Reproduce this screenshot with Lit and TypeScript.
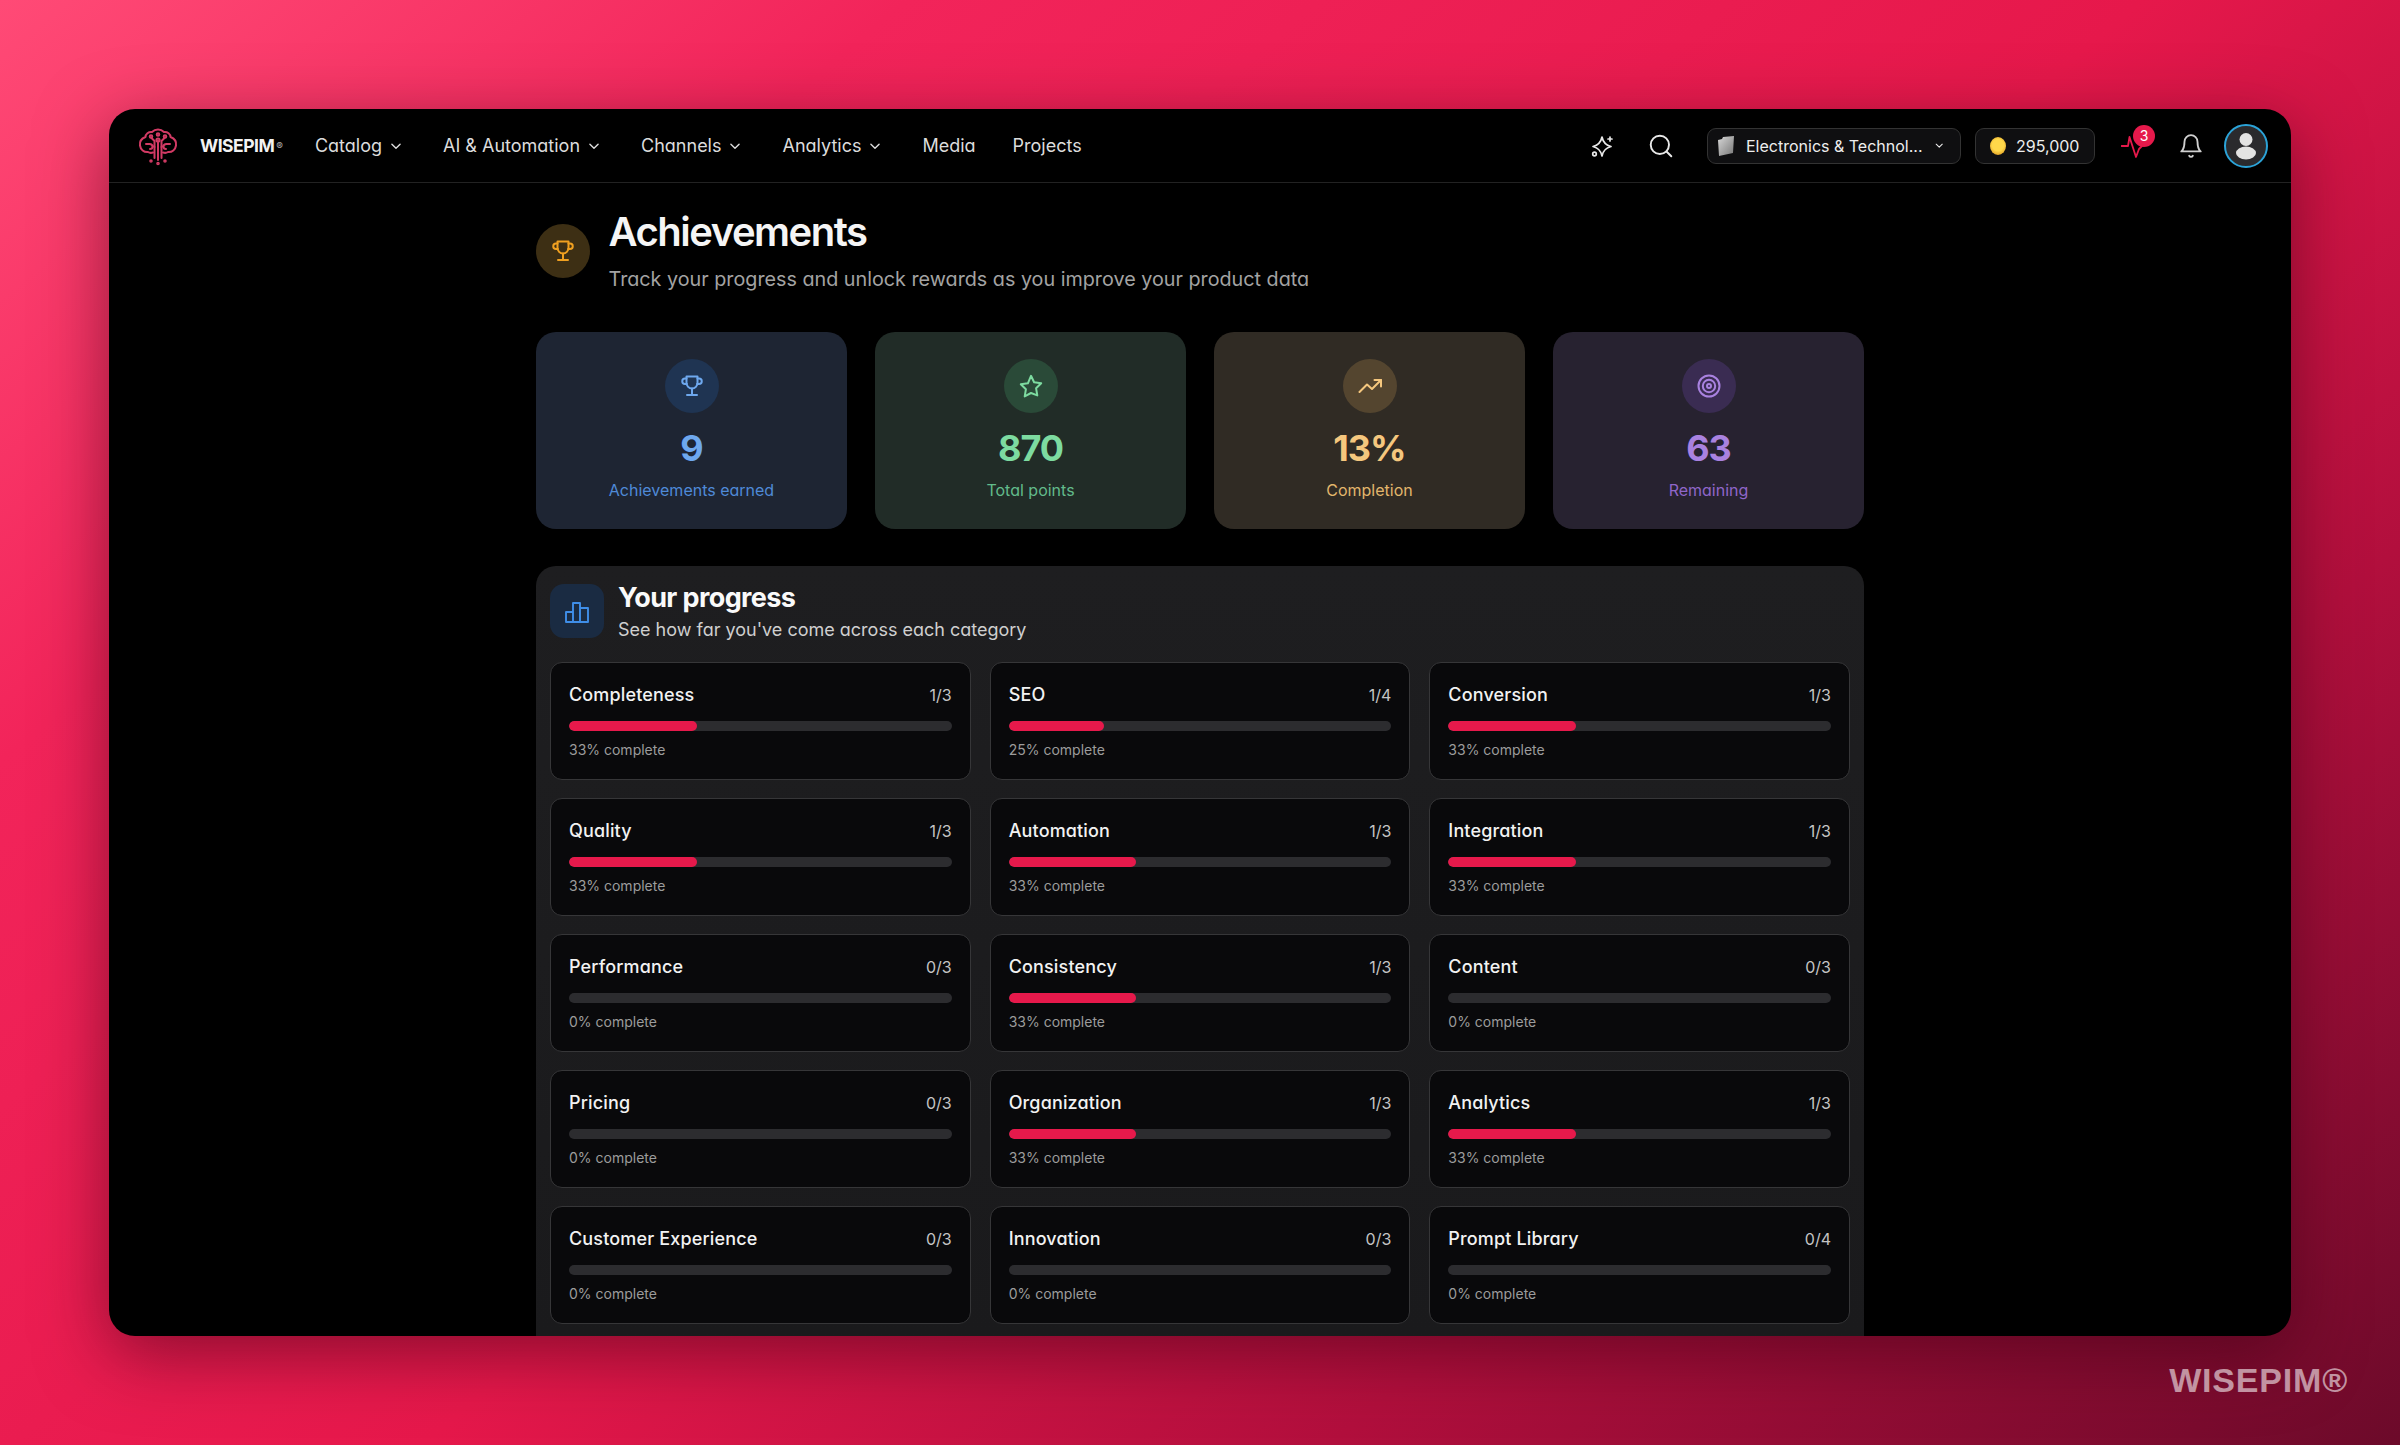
import { LitElement, html, css, svg } from "lit";
import { customElement } from "lit/decorators.js";

const cats: [string, number, number][] = [
  ["Completeness", 1, 3], ["SEO", 1, 4], ["Conversion", 1, 3],
  ["Quality", 1, 3], ["Automation", 1, 3], ["Integration", 1, 3],
  ["Performance", 0, 3], ["Consistency", 1, 3], ["Content", 0, 3],
  ["Pricing", 0, 3], ["Organization", 1, 3], ["Analytics", 1, 3],
  ["Customer Experience", 0, 3], ["Innovation", 0, 3], ["Prompt Library", 0, 4],
];

const chev = html`<svg class="chev" viewBox="0 0 12 12"><path d="M2.5 4.5 6 8l3.5-3.5"/></svg>`;
const trophy = svg`<path d="M6.500 2.500h11V9a5.500 5.500 0 0 1-11 0z"/><path d="M6.500 4.500H5a2.500 2.500 0 0 0 0 5.500h1.900"/><path d="M17.500 4.500H19a2.500 2.500 0 0 1 0 5.500h-1.900"/><path d="M12 14.500V21"/><path d="M7 21h10"/>`;
const star = svg`<path d="M12 1.800l3.100 6.500 7.100 1-5.100 5 1.200 7.100L12 19l-6.300 3.400 1.200-7.100-5.100-5 7.100-1z"/>`;
const trend = svg`<path d="M23 6l-9 9-5-4.500L1.500 18"/><path d="M16.500 6H23v6.500"/>`;
const target = svg`<circle cx="12" cy="12" r="10.500"/><circle cx="12" cy="12" r="6.200"/><circle cx="12" cy="12" r="2"/>`;

const stats = [
  { cls: "blue", icon: trophy, v: "9", l: "Achievements earned" },
  { cls: "green", icon: star, v: "870", l: "Total points" },
  { cls: "amber", icon: trend, v: "13%", l: "Completion" },
  { cls: "purple", icon: target, v: "63", l: "Remaining" },
];

@customElement("app-root")
export class AppRoot extends LitElement {
  static styles = css`
    :host { display: block; height: 1445px; overflow: hidden; font-family: Inter, "Noto Sans", sans-serif; font-feature-settings: "cv11"; color: #fff; }
    .stage { position: relative; height: 1445px; box-sizing: border-box; padding: 109px 109px 109px; background: linear-gradient(140deg, #ff4a76 0%, #f2245a 22%, #e6184b 52%, #b20f3d 74%, #6c0a2a 100%); }
    .window { height: 1227px; background: #000; border-radius: 26px; overflow: hidden; box-shadow: 0 18px 70px rgba(60,0,20,.55); }
    nav { height: 73px; border-bottom: 1px solid #222; display: flex; align-items: center; padding: 0 23px 0 29px; box-sizing: content-box; }
    .logo { width: 40px; height: 40px; flex: none; }
    .brand { margin-left: 22px; font-size: 17.500px; font-weight: 700; letter-spacing: -.5px; color: #f2f2f2; display: flex; align-items: center; gap: 2px; font-feature-settings: normal; }
    .brand small { font-size: 10px; color: #aaa; font-weight: 500; letter-spacing: 0; }
    .links { display: flex; margin-left: 32px; gap: 40px; font-size: 18px; color: #dcdcdc; }
    .links span { display: flex; align-items: center; gap: 7px; white-space: nowrap; }
    .links .tight { margin-right: -3px; }
    .chev { width: 14px; height: 14px; fill: none; stroke: currentColor; stroke-width: 1.2; stroke-linecap: round; stroke-linejoin: round; }
    .right { margin-left: auto; display: flex; align-items: center; }
    .ic { fill: none; stroke: #e8e8e8; stroke-width: 1.7; stroke-linecap: round; stroke-linejoin: round; width: 24px; height: 24px; flex: none; }
    .sp { margin-right: 36px; }
    .se { margin-right: 34px; }
    .pill { height: 36px; box-sizing: border-box; border: 1px solid #333; border-radius: 9px; background: #0f0f11; display: flex; align-items: center; font-size: 16px; color: #eee; white-space: nowrap; }
    .sel { width: 254px; padding: 0 16px 0 9px; gap: 11px; margin-right: 14px; }
    .sel .txt { flex: 1; }
    .sel .chev { width: 15px; height: 15px; }
    .folder { width: 18px; height: 22px; flex: none; }
    .coinp { width: 120px; padding: 0 13px 0 14px; gap: 10px; margin-right: 26px; }
    .coin { width: 16px; height: 18px; border-radius: 50%; background: radial-gradient(circle at 50% 45%, #ffd84a 0 45%, #e6a92a 75%, #f0c870 100%); flex: none; }
    .pulse { position: relative; width: 30px; height: 36px; margin-right: 27px; display: flex; align-items: center; }
    .pulse svg { width: 30px; height: 36px; fill: none; stroke: #e6194b; stroke-width: 1.800; stroke-linejoin: round; stroke-linecap: round; }
    .badge { position: absolute; left: 12px; top: -3px; width: 22px; height: 22px; border-radius: 50%; background: #e6194b; color: #fff; font-size: 14px; display: flex; align-items: center; justify-content: center; }
    .bell { margin-right: 20px; width: 26px; height: 26px; stroke: #cfcfcf; }
    .avatar { width: 44px; height: 44px; box-sizing: border-box; border-radius: 50%; border: 2px solid #2ba3d8; background: #2a2a2d; display: flex; align-items: center; justify-content: center; }
    .avatar svg { width: 24px; height: 28px; fill: #e3e3e3; }
    main { width: 1328px; margin: 0 auto 0 427px; padding-top: 25px; }
    header { display: flex; align-items: center; gap: 18.500px; margin-bottom: 39px; }
    .hicon { width: 54px; height: 54px; border-radius: 50%; background: #3d2f14; display: flex; align-items: center; justify-content: center; flex: none; color: #f0a020; }
    .hicon svg, .sicon svg { width: 24px; height: 24px; fill: none; stroke: currentColor; stroke-width: 2; stroke-linecap: round; stroke-linejoin: round; }
    h1 { margin: 0; font-size: 40px; line-height: 48px; font-weight: 600; letter-spacing: -1.500px; color: #f5f5f5; }
    .hsub { margin-top: 9px; font-size: 19.750px; line-height: 28px; color: #a3a3a3; }
    .stats { display: grid; grid-template-columns: repeat(4, 1fr); gap: 28px; margin-bottom: 37px; }
    .stat { height: 197px; box-sizing: border-box; border-radius: 20px; padding-top: 27px; display: flex; flex-direction: column; align-items: center; }
    .sicon { width: 54px; height: 54px; border-radius: 50%; display: flex; align-items: center; justify-content: center; }
    .sv { margin-top: 15px; font-size: 36px; line-height: 40px; font-weight: 700; letter-spacing: -1px; }
    .sl { margin-top: 10px; font-size: 16px; line-height: 24px; }
    .blue { background: #1e2533; } .blue .sicon { background: #1f3452; color: #6ea8ee; } .blue .sv { color: #6ea8ee; } .blue .sl { color: #4f8ad8; }
    .green { background: #212c27; } .green .sicon { background: #2a4a38; color: #7ddba0; } .green .sv { color: #7ddba0; } .green .sl { color: #62bb8b; }
    .amber { background: #302b24; } .amber .sicon { background: #54452f; color: #f5c77e; } .amber .sv { color: #f5c77e; } .amber .sl { color: #e2b66c; }
    .purple { background: #272230; } .purple .sicon { background: #3a2c52; color: #a982e0; } .purple .sv { color: #a982e0; } .purple .sl { color: #8f66c9; }
    .panel { background: linear-gradient(180deg, #1e1e20, #1a1a1c); border-radius: 20px 20px 0 0; padding: 18px 14px 14px; }
    .phead { display: flex; gap: 14px; margin-bottom: 20px; height: 58px; }
    .picon { width: 54px; height: 54px; border-radius: 14px; background: #1a2b42; color: #3f8ee8; display: flex; align-items: center; justify-content: center; flex: none; }
    .picon svg { width: 26px; height: 26px; fill: none; stroke: currentColor; stroke-width: 1.900; stroke-linejoin: round; }
    .ptext { padding-top: 1px; }
    h2 { margin: 0; font-size: 27px; line-height: 26px; font-weight: 700; letter-spacing: -.6px; color: #fafafa; font-feature-settings: normal; }
    .psub { margin-top: 7px; font-size: 18px; line-height: 24px; color: #cfcfcf; }
    .grid { display: grid; grid-template-columns: repeat(3, 1fr); gap: 18px 19px; }
    .card { border: 1px solid #363638; border-radius: 12px; background: #09090b; padding: 19px 18px; }
    .top { display: flex; justify-content: space-between; line-height: 26px; }
    .name { font-size: 18px; font-weight: 500; letter-spacing: .15px; color: #f2f2f2; }
    .cnt { font-size: 16px; color: #c4c4c4; }
    .track { margin-top: 13px; height: 10px; border-radius: 5px; background: #2c2c2f; overflow: hidden; }
    .fill { height: 100%; border-radius: 5px; background: #e6194b; }
    .pct { margin-top: 9px; font-size: 14px; line-height: 20px; color: #9c9c9c; }
    .mark { position: absolute; right: 52px; top: 1362px; font-family: "Liberation Sans", Arial, sans-serif; font-weight: 700; font-size: 34px; line-height: 36px; letter-spacing: .8px; color: rgba(255,255,255,.56); font-feature-settings: normal; }
  `;

  render() {
    return html`<div class="stage">
      <div class="window">
        <nav>
          <svg class="logo" viewBox="0 0 40 40" fill="none" stroke="#d23a64" stroke-width="2" stroke-linecap="round" stroke-linejoin="round">
            <path d="M20 3.500c-2.500 0-4.500 1-6 2.500-3.500-.5-6.500 2-6.500 5C3.500 12.500 1.500 16 2 19.500c.5 4 4 7 8 6.500 1.500 1 3.500 1 5 .5M20 3.500c2.500 0 4.500 1 6 2.500 3.500-.5 6.500 2 6.500 5 4 1.500 6 5 5.500 8.500-.5 4-4 7-8 6.500-1.500 1-3.500 1-5 .5"/>
            <path d="M20 15v19M16.500 21v11M23.500 21v11"/>
            <path d="M13.500 12l3 3v6M26.500 12l-3 3v6M8 18h3.500c2 0 3 1 3 2.500s-1 2.500-2.500 2.500M32 18h-3.500c-2 0-3 1-3 2.500s1 2.500 2.500 2.500"/>
            <circle cx="20" cy="8.500" r="1.300"/><circle cx="13" cy="10.500" r="1.300"/><circle cx="27" cy="10.500" r="1.300"/><circle cx="20" cy="14" r="1.600"/>
            <circle cx="13" cy="35" r=".8"/><circle cx="27" cy="35" r=".8"/><circle cx="20" cy="37.500" r=".8"/>
          </svg>
          <div class="brand">WISEPIM<small>®</small></div>
          <div class="links">
            <span>Catalog ${chev}</span><span>AI &amp; Automation ${chev}</span><span>Channels ${chev}</span><span>Analytics ${chev}</span><span class="tight">Media</span><span>Projects</span>
          </div>
          <div class="right">
            <svg class="ic sp" viewBox="0 0 24 24"><path d="M13 3c1 5 3 8 9 9.500-6 1.500-8 4.500-9 9.500-1-5-3-8-9-9.500 6-1.500 8-4.500 9-9.500Z"/><path d="M21 3v4M19 5h4"/><circle cx="5.500" cy="20" r="1.800"/></svg>
            <svg class="ic se" viewBox="1.500 1.500 21 21"><circle cx="11" cy="11" r="8"/><path d="m21 21-4.200-4.200"/></svg>
            <div class="pill sel">
              <svg class="folder" viewBox="0 0 18 22"><defs><linearGradient id="fg" x1="0" y1="0" x2="1" y2="1"><stop offset="0" stop-color="#d8d8d8"/><stop offset="1" stop-color="#777"/></linearGradient></defs><path d="M1 5l4-1 1-2 11-1-1 17L2 21z" fill="url(#fg)"/></svg>
              <span class="txt">Electronics &amp; Technol...</span>${chev}
            </div>
            <div class="pill coinp"><span class="coin"></span>295,000</div>
            <div class="pulse">
              <svg viewBox="0 0 30 36"><path d="M0.500 18h6.500l1.500-9 6.500 20 3-8 3-3"/></svg>
              <span class="badge">3</span>
            </div>
            <svg class="ic bell" viewBox="0 0 24 24"><path d="M6 8a6 6 0 0 1 12 0c0 7 3 9 3 9H3s3-2 3-9"/><path d="M10.300 21a1.940 1.940 0 0 0 3.400 0"/></svg>
            <div class="avatar"><svg viewBox="0 0 24 28"><circle cx="12" cy="7.500" r="6.500"/><ellipse cx="12" cy="21" rx="10" ry="6.500"/></svg></div>
          </div>
        </nav>
        <main>
          <header>
            <div class="hicon"><svg viewBox="0 0 24 24">${trophy}</svg></div>
            <div>
              <h1>Achievements</h1>
              <div class="hsub">Track your progress and unlock rewards as you improve your product data</div>
            </div>
          </header>
          <section class="stats">
            ${stats.map((s) => html`<div class="stat ${s.cls}">
              <div class="sicon"><svg viewBox="0 0 24 24">${s.icon}</svg></div>
              <div class="sv">${s.v}</div>
              <div class="sl">${s.l}</div>
            </div>`)}
          </section>
          <section class="panel">
            <div class="phead">
              <div class="picon"><svg viewBox="0 0 26 26"><path d="M2 24V14h7v10zM9 24V5h7v19zM16 24V10h8v14z"/></svg></div>
              <div class="ptext">
                <h2>Your progress</h2>
                <div class="psub">See how far you've come across each category</div>
              </div>
            </div>
            <div class="grid">
              ${cats.map(([n, a, b]) => {
                const p = Math.floor((a / b) * 100);
                return html`<div class="card">
                  <div class="top"><span class="name">${n}</span><span class="cnt">${a}/${b}</span></div>
                  <div class="track"><div class="fill" style="width:${(a / b) * 100}%"></div></div>
                  <div class="pct">${p}% complete</div>
                </div>`;
              })}
            </div>
          </section>
        </main>
      </div>
      <div class="mark">WISEPIM®</div>
    </div>`;
  }
}
